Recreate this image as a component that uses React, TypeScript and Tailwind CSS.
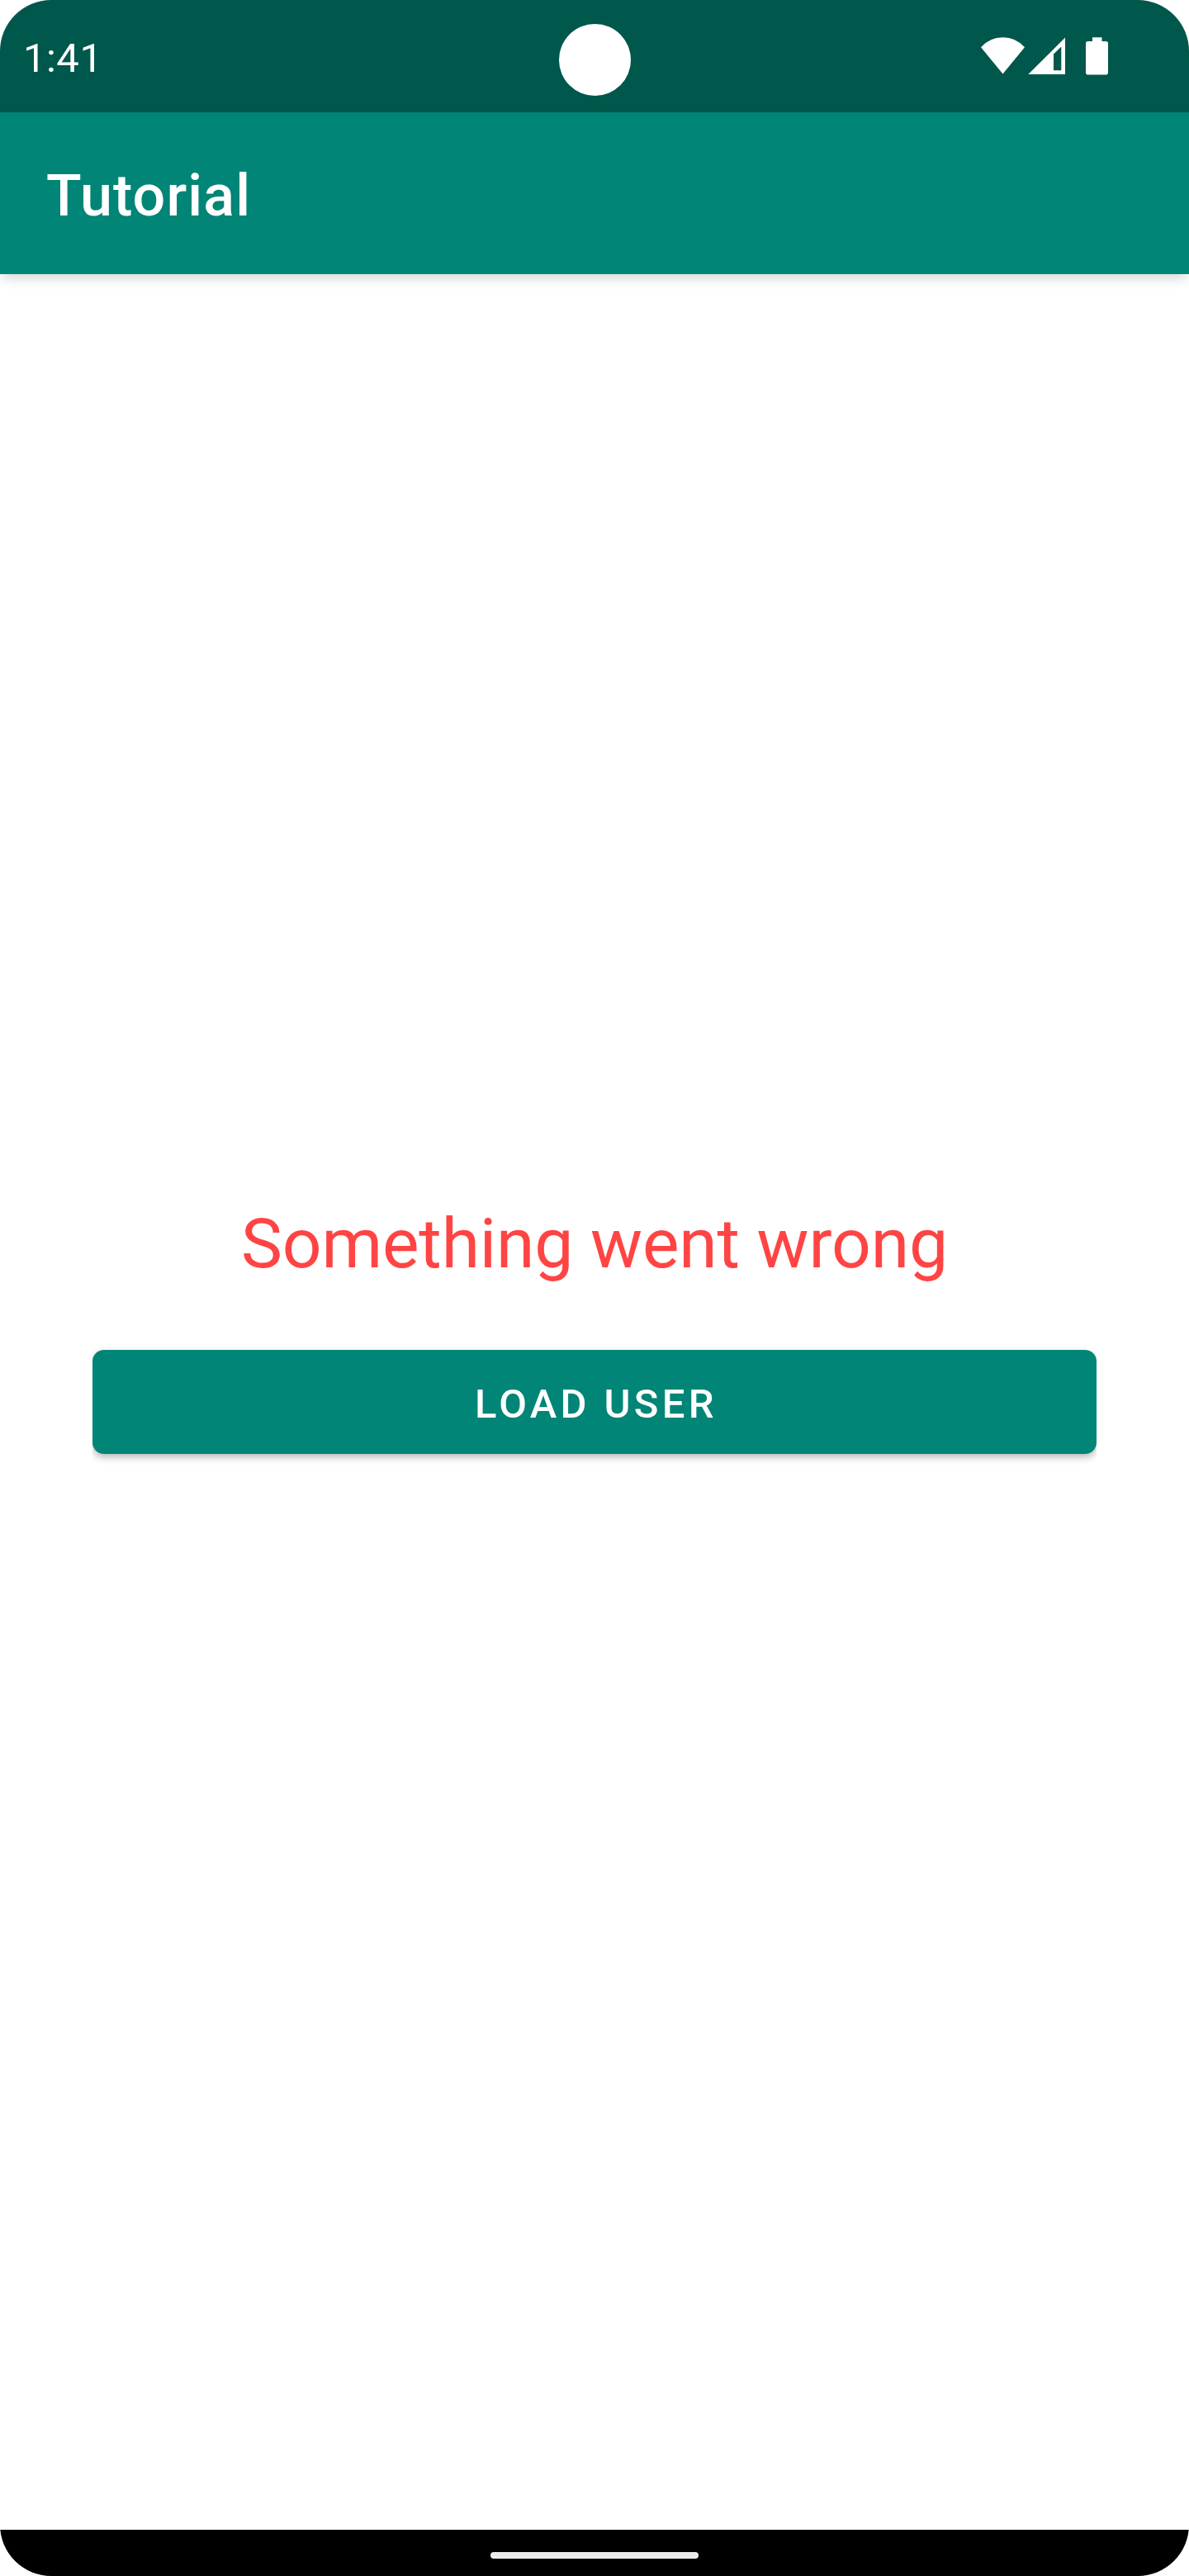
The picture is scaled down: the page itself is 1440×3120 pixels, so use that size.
function StatusIcons() {
  return (
    <svg width="154" height="48" viewBox="1188 44 154 48" fill="#fff" aria-hidden="true">
      <path d="M1188 57.3 Q1198.5 45.2 1214.5 45.2 Q1230.5 45.2 1241 57.3 L1214.5 89.5 Z" />
      <path fillRule="evenodd" d="M1290 45.5 V90 H1245.3 Z M1285.3 56.5 L1276 65.5 V85.2 H1285.3 Z" />
      <path d="M1323 45.2 H1334.5 V50 H1339.2 Q1342 50 1342 52.8 V87.8 Q1342 90.6 1339.2 90.6 H1317.8 Q1315 90.6 1315 87.8 V52.8 Q1315 50 1317.8 50 H1323 Z" />
    </svg>
  );
}

function StatusBar() {
  return (
    <header className="relative z-20 flex h-[136px] shrink-0 items-start justify-between bg-[#00574b] pr-[98px] pl-7 text-white">
      <span className="mt-10 text-[49px] leading-[61px] tracking-[0.48px]">1:41</span>
      <div className="absolute top-[29px] left-[677px] size-[87px] rounded-full bg-white" />
      <div className="mt-11">
        <StatusIcons />
      </div>
    </header>
  );
}

function AppBar() {
  return (
    <div className="z-10 flex h-[196px] shrink-0 items-center bg-[#008577] px-14 pt-1.5 shadow-[0_8px_14px_-3px_rgba(0,0,0,0.16)]">
      <h1 className="text-[70px] leading-[82px] font-medium tracking-[1.13px] text-white">Tutorial</h1>
    </div>
  );
}

export default function App() {
  return (
    <div className="h-[3120px] w-[1440px] bg-white">
      <div className="flex h-full flex-col overflow-hidden rounded-[62px] bg-white font-[Roboto,sans-serif]">
        <StatusBar />
        <AppBar />
        <main className="flex flex-1 flex-col bg-white px-28 pt-[1119px]">
          <p className="text-center text-[84px] leading-[112px] tracking-[-0.15px] text-[#ff4444]">
            Something went wrong
          </p>
          <div className="mt-[52px] overflow-x-clip pt-5 pb-6">
            <button className="flex h-[126px] w-full items-center justify-center rounded-[14px] bg-[#008577] pt-1.5 pl-1 text-[49px] leading-[74px] font-medium tracking-[4.33px] text-white shadow-[0_4px_10px_rgba(0,0,0,0.28)]">
              LOAD USER
            </button>
          </div>
        </main>
        <footer className="flex h-14 shrink-0 items-start justify-center bg-black pt-[27px]">
          <div className="h-2 w-[252px] rounded-full bg-[#ebebeb]" />
        </footer>
      </div>
    </div>
  );
}
